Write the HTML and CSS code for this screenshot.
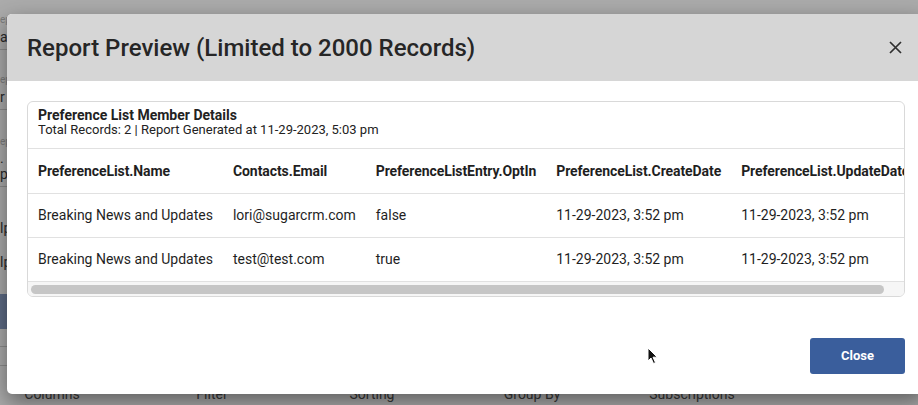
FILE: index.html
```html
<!DOCTYPE html>
<html>
<head>
<meta charset="utf-8">
<link rel="stylesheet" href="styles.css">
</head>
<body>
<div class="page">
  <aside class="side">
    <div class="field f1"><div class="lbl">ep</div><div class="val">a</div></div>
    <div class="field f2"><div class="lbl">ep</div><div class="val">r</div></div>
    <div class="field f3"><div class="lbl">ep</div><div class="val">. r</div><div class="val">p</div></div>
    <div class="plain p1">lp</div>
    <div class="plain p2">lp</div>
    <div class="bluebar"></div>
    <div class="rule r1"></div>
    <div class="rule r2"></div>
  </aside>
  <nav class="tabs">
    <span>Columns</span><span>Filter</span><span>Sorting</span><span>Group By</span><span>Subscriptions</span>
  </nav>
</div>

<div class="modal">
  <header class="modal-head">
    <h1 class="modal-title">Report Preview (Limited to 2000 Records)</h1>
    <button class="x-btn" aria-label="Close">
      <svg width="13" height="13" viewBox="0 0 13 13"><path d="M1 1L12 12M12 1L1 12" stroke="#2f2f2f" stroke-width="1.7" fill="none"/></svg>
    </button>
  </header>
  <div class="modal-body">
    <div class="card">
      <div class="card-head">
        <div class="card-title">Preference List Member Details</div>
        <div class="card-sub">Total Records: 2 | Report Generated at 11-29-2023, 5:03 pm</div>
      </div>
      <div class="table-wrap">
        <table class="grid">
          <thead>
            <tr><th>PreferenceList.Name</th><th>Contacts.Email</th><th>PreferenceListEntry.OptIn</th><th>PreferenceList.CreateDate</th><th>PreferenceList.UpdateDate</th></tr>
          </thead>
          <tbody>
            <tr><td>Breaking News and Updates</td><td>lori@sugarcrm.com</td><td>false</td><td>11-29-2023, 3:52 pm</td><td>11-29-2023, 3:52 pm</td></tr>
            <tr><td>Breaking News and Updates</td><td>test@test.com</td><td>true</td><td>11-29-2023, 3:52 pm</td><td>11-29-2023, 3:52 pm</td></tr>
          </tbody>
        </table>
      </div>
      <div class="hscroll"><div class="thumb"></div></div>
    </div>
  </div>
  <footer class="modal-foot">
    <button class="close-btn">Close</button>
  </footer>
</div>

<svg class="cursor" width="12" height="18" viewBox="0 0 12 18"><path d="M1 1L1 14L4 11L6.5 16.5L8.5 15.6L6 10.2L10.2 10.2Z" fill="#111" stroke="#fff" stroke-width="1"/></svg>
</body>
</html>
```
FILE: styles.css
```css
* { box-sizing: border-box; }
html, body { margin: 0; padding: 0; }
body {
  width: 918px;
  height: 405px;
  overflow: hidden;
  background: #ababab;
  font-family: Roboto, "Liberation Sans", sans-serif;
  color: #222;
  position: relative;
}
.page {
  height: 405px;
  display: flex;
  flex-direction: column;
}
.side {
  width: 40px;
  flex: 1;
  overflow: hidden;
}
.field { border-bottom: 1px solid #8d8d8d; }
.lbl { font-size: 10px; line-height: 12px; color: #7c7c7c; margin-bottom: 2px; }
.val { font-size: 14px; line-height: 16px; color: #2a2a2a; }
.f1 { padding-top: 14px; height: 50px; }
.f1 .val { line-height: 18px; }
.f2 { padding-top: 24px; height: 60px; }
.f2 .val { line-height: 18px; }
.f3 { padding-top: 26px; height: 77px; }
.plain { font-size: 14px; color: #2a2a2a; line-height: 18px; }
.p1 { margin-top: 32px; }
.p2 { margin-top: 16px; }
.bluebar { margin-top: 23px; height: 35px; background: #5e6c86; }
.rule { border-bottom: 1px solid #8d8d8d; }
.r1 { margin-top: 17px; }
.r2 { margin-top: 18px; }
.tabs {
  display: grid;
  grid-template-columns: repeat(5, 160px);
  margin-left: -28px;
  height: 20px;
  font-size: 14px;
  line-height: 20px;
  color: #383838;
  text-align: center;
  margin-bottom: 1px;
}

.modal {
  position: absolute;
  left: 7px;
  top: 14px;
  width: 918px;
  height: 380px;
  background: #fff;
  border-radius: 5px;
  overflow: hidden;
  box-shadow: 0 8px 22px rgba(0,0,0,0.45);
  display: flex;
  flex-direction: column;
}
.modal-head {
  height: 67px;
  flex: none;
  background: #d6d6d6;
  display: flex;
  align-items: center;
  justify-content: space-between;
  padding: 0 23px 0 20px;
}
.modal-title {
  margin: 0;
  font-size: 24px;
  font-weight: 500;
  color: #262626;
}
.x-btn {
  border: 0;
  background: none;
  padding: 0;
  width: 13px;
  height: 13px;
  display: flex;
}
.modal-body { padding: 20px 20px 0; }
.card {
  border: 1px solid #d9d9d9;
  border-radius: 6px;
  overflow: hidden;
}
.card-head {
  padding: 5px 10px 11px;
  border-bottom: 1px solid #e1e1e1;
}
.card-title { font-size: 14px; line-height: 16px; font-weight: 700; color: #222; }
.card-sub { font-size: 13px; line-height: 14px; color: #222; }
.table-wrap { overflow: hidden; }
.grid {
  border-collapse: collapse;
  white-space: nowrap;
  font-size: 14px;
  color: #1f1f1f;
}
.grid th, .grid td {
  height: 44px;
  padding: 0 10px;
  text-align: left;
  vertical-align: middle;
  border-bottom: 1px solid #e1e1e1;
}
.grid th { font-weight: 700; letter-spacing: -0.08px; }
.hscroll {
  height: 14px;
  background: #f6f6f6;
  padding: 3px 0 0 3px;
}
.thumb {
  width: 853px;
  height: 9px;
  border-radius: 5px;
  background: #c6c6c6;
}
.modal-foot {
  display: flex;
  justify-content: flex-end;
  padding: 41px 20px 0;
}
.close-btn {
  width: 95px;
  height: 36px;
  border: 0;
  border-radius: 3px;
  background: #3a5e9c;
  color: #fff;
  font-family: Roboto, "Liberation Sans", sans-serif;
  font-size: 13px;
  font-weight: 700;
}
.cursor {
  position: absolute;
  left: 647px;
  top: 347px;
}
```
